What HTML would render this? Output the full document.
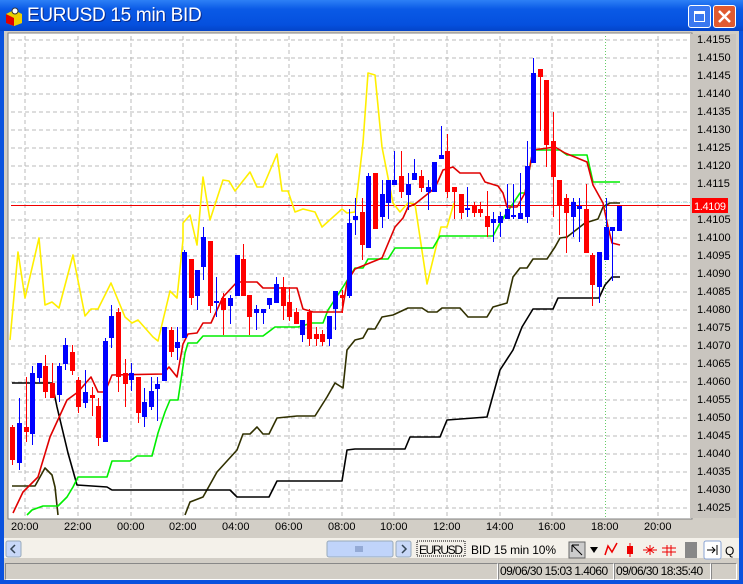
<!DOCTYPE html>
<html><head><meta charset="utf-8"><style>
*{margin:0;padding:0;box-sizing:border-box}
body{width:743px;height:584px;overflow:hidden;background:#0a52de;font-family:"Liberation Sans",sans-serif;position:relative}
.title{position:absolute;left:0;top:0;width:743px;height:31px;background:linear-gradient(#2d80f6,#0a5ae6 30%,#0550de 80%,#0444c8)}
.title span{position:absolute;left:27px;top:5px;color:#fff;font-size:19px;letter-spacing:-0.3px;text-shadow:1px 1px #0a2a8a}
.inner{position:absolute;left:4px;top:31px;width:735px;height:549px;background:#d2cec6}
.btn{position:absolute;top:5px;width:23px;height:23px;border:1px solid #fff;border-radius:3px}
.status div{position:absolute;top:563px;height:17px;border:1px solid #888;border-right-color:#fff;border-bottom-color:#fff;font-size:12px;line-height:15px;padding-left:1px;color:#000;background:#d2cec6;white-space:nowrap;overflow:hidden;letter-spacing:-0.6px}
.xl{position:absolute;top:521px;font-size:11px;color:#000}
.yl{position:absolute;left:697px;font-size:11px;color:#000}
</style></head><body>
<div class="title">
<svg style="position:absolute;left:4px;top:6px" width="20" height="20"><path d="M2 8 L10 4 L18 8 L18 17 L10 20 L2 17Z" fill="#e8d000"/><path d="M2 8 L10 12 L10 20 L2 17Z" fill="#e00000"/><path d="M10 12 L18 8 L18 17 L10 20Z" fill="#f0d000"/><circle cx="11" cy="5" r="3" fill="#fff" stroke="#333"/></svg>
<span>EURUSD 15 min BID</span>
<div class="btn" style="left:688px;background:#3a78f0"><div style="position:absolute;left:5px;top:5px;width:11px;height:11px;border:1px solid #fff;border-top-width:3px"></div></div>
<div class="btn" style="left:713px;background:#e05a30"><svg width="21" height="21"><path d="M5 5L16 16M16 5L5 16" stroke="#fff" stroke-width="2.5"/></svg></div>
</div>
<div class="inner"></div>
<svg style="position:absolute;left:0;top:0" width="743" height="584">
<rect x="8" y="33" width="684" height="486" fill="#fff" stroke="#808080"/>
<rect x="690" y="34" width="46" height="484" fill="#c9c5bf"/>
<g stroke="#bbb" stroke-dasharray="4,3" stroke-width="1">
<path d="M11 40H690M11 58H690M11 76H690M11 94H690M11 112H690M11 130H690M11 148H690M11 166H690M11 184H690M11 202H690M11 220H690M11 238H690M11 256H690M11 274H690M11 292H690M11 310H690M11 328H690M11 346H690M11 364H690M11 382H690M11 400H690M11 418H690M11 436H690M11 454H690M11 472H690M11 490H690M11 508H690"/>
<path d="M25 36V517M78 36V517M131 36V517M183 36V517M236 36V517M289 36V517M342 36V517M394 36V517M447 36V517M500 36V517M552 36V517M658 36V517"/>
</g>
<path d="M605.5 36V517" stroke="#6c6" stroke-dasharray="1,2"/>
<path d="M11 202.5H690" stroke="#aee" stroke-dasharray="1,1"/>
<path d="M11 205.5H690" stroke="#e00" stroke-width="1"/>
<g fill="none" stroke-width="1.6" stroke-linejoin="round">
<polyline stroke="#ffef00" points="10,340 18,252 25,298 39,238 45,305 52,302 59,308 73,255 85,316 91,309 98,309 111,283 125,317 132,323 138,320 153,337 158,341 170,291 177,298 183,240 183,223 190,215 197,245 203,177 210,220 223,180 229,181 235,191 250,172 257,187 263,187 277,154 282,191 288,191 295,212 303,209 315,212 322,227 342,209 347,213 355,212 363,143 368,73 375,75 382,147 393,203 400,212 408,203 415,204 427,284 441,227 447,227 454,203"/>
<polyline stroke="#303000" points="12,486 35,486 45,468 52,475 55,487 58,515"/>
<polyline stroke="#303000" points="185,515 190,502 203,497 217,472 237,450 243,434 250,434 257,427 263,434 269,434 277,418 297,416 315,416 327,397 335,383 343,388 347,350 355,340 363,338 368,329 375,329 382,317 393,315 408,308 422,308 428,312 437,312 442,308 460,308 468,317 487,317 493,307 507,303 513,277 520,268 527,268 533,259 547,259 555,247 560,238 567,237 585,223 598,219 603,207 610,203 620,203"/>
<polyline stroke="#000" points="12,383 52,383 57,407 68,453 77,485 107,487 112,490 230,490 237,497 269,497 277,481 342,481 347,450 355,449 405,449 410,437 440,437 447,420 487,417 500,370 513,350 522,327 533,309 553,309 558,298 599,298 605,285 612,277 620,277"/>
<polyline stroke="#00ee00" points="27,515 32,510 43,506 58,506 67,497 73,487 78,477 107,477 112,461 130,461 137,456 152,456 158,433 165,412 170,400 178,400 185,353 188,343 197,343 203,336 263,336 275,327 298,327 312,323 323,323 328,310 343,287 355,268 363,268 368,259 388,259 395,248 433,248 440,236 493,236 500,223 520,193 525,193 533,150 560,150 567,155 587,155 593,182 620,182"/>
<polyline stroke="#e00000" points="13,513 23,492 38,477 50,437 67,400 78,392 91,377 98,392 105,392 112,375 163,374 169,367 177,377 183,344 188,334 197,333 203,323 211,323 223,297 237,282 257,282 263,288 297,288 303,309 313,312 342,312 347,282 355,269 382,258 395,227 403,218 408,207 415,204 435,188 443,170 453,167 460,173 480,173 485,182 498,186 503,193 507,207 517,207 525,193 533,150 555,147 565,153 587,162 593,185 603,203 608,227 612,243 620,245"/>
</g>
<g id="c"></g>
<rect x="692" y="198" width="36" height="15" fill="#f00"/>
<text x="694" y="210" fill="#fff" font-size="11" font-family="Liberation Sans" textLength="32">1.4109</text>
<rect x="4" y="538" width="735" height="20" fill="#f4f1ea"/>
<rect x="6" y="541" width="15" height="16" rx="2" fill="#c8d8f8" stroke="#9ab"/>
<path d="M15 545L11 549L15 553" stroke="#345" stroke-width="1.5" fill="none"/>
<rect x="327" y="541" width="66" height="16" rx="2" fill="#c0d4fa" stroke="#9ab"/>
<path d="M356 546V552M358 546V552M360 546V552M362 546V552" stroke="#6780b0"/>
<rect x="396" y="541" width="15" height="16" rx="2" fill="#c8d8f8" stroke="#9ab"/>
<path d="M402 545L406 549L402 553" stroke="#345" stroke-width="1.5" fill="none"/>
<rect x="417" y="541" width="48" height="15" fill="none" stroke="#000" stroke-dasharray="1,1"/>
<text x="419" y="554" font-size="12" font-family="Liberation Sans" textLength="44">EURUSD</text>
<text x="471" y="554" font-size="12" font-family="Liberation Sans" textLength="85">BID  15 min  10%</text>
<rect x="569" y="542" width="16" height="16" fill="#ccc" stroke="#666"/>
<path d="M572 545L582 555M572 545V552M572 545H579" stroke="#000"/>
<path d="M590 547H598L594 553Z" fill="#000"/>
<path d="M605 555L608 546L612 552L617 543" stroke="#e00" fill="none" stroke-width="1.5"/>
<path d="M630 543V557" stroke="#e00"/><rect x="627" y="546" width="6" height="8" fill="#e00"/>
<path d="M643 550H657M650 545V555M646 547L650 550L646 553M654 547L650 550L654 553" stroke="#e00" fill="none"/>
<path d="M662 548H676M662 552H676M667 545V556M671 545V556" stroke="#e00"/>
<rect x="685" y="542" width="12" height="16" fill="#888"/>
<rect x="704" y="541" width="17" height="18" rx="2" fill="#fff" stroke="#8aa4d4"/>
<path d="M707 550H715M712 547L715 550L712 553M717 545V555" stroke="#000" fill="none"/>
<text x="725" y="555" font-size="12" font-family="Liberation Sans">Q</text>
</svg>
<div class="xl" style="left:11px">20:00</div><div class="xl" style="left:64px">22:00</div><div class="xl" style="left:117px">00:00</div><div class="xl" style="left:169px">02:00</div><div class="xl" style="left:222px">04:00</div><div class="xl" style="left:275px">06:00</div><div class="xl" style="left:328px">08:00</div><div class="xl" style="left:380px">10:00</div><div class="xl" style="left:433px">12:00</div><div class="xl" style="left:486px">14:00</div><div class="xl" style="left:538px">16:00</div><div class="xl" style="left:591px">18:00</div><div class="xl" style="left:644px">20:00</div>
<div class="yl" style="top:34px">1.4155</div><div class="yl" style="top:52px">1.4150</div><div class="yl" style="top:70px">1.4145</div><div class="yl" style="top:88px">1.4140</div><div class="yl" style="top:106px">1.4135</div><div class="yl" style="top:124px">1.4130</div><div class="yl" style="top:142px">1.4125</div><div class="yl" style="top:160px">1.4120</div><div class="yl" style="top:178px">1.4115</div><div class="yl" style="top:214px">1.4105</div><div class="yl" style="top:232px">1.4100</div><div class="yl" style="top:250px">1.4095</div><div class="yl" style="top:268px">1.4090</div><div class="yl" style="top:286px">1.4085</div><div class="yl" style="top:304px">1.4080</div><div class="yl" style="top:322px">1.4075</div><div class="yl" style="top:340px">1.4070</div><div class="yl" style="top:358px">1.4065</div><div class="yl" style="top:376px">1.4060</div><div class="yl" style="top:394px">1.4055</div><div class="yl" style="top:412px">1.4050</div><div class="yl" style="top:430px">1.4045</div><div class="yl" style="top:448px">1.4040</div><div class="yl" style="top:466px">1.4035</div><div class="yl" style="top:484px">1.4030</div><div class="yl" style="top:502px">1.4025</div>
<div class="status">
<div style="left:5px;width:493px"></div>
<div style="left:498px;width:116px">09/06/30 15:03 1.4060</div>
<div style="left:614px;width:97px">09/06/30 18:35:40</div>
<div style="left:711px;width:26px"></div>
</div>
<script>
var R=[[12,425,465,427,460],[26,377,442,427,432],[45,355,398,366,392],[52,363,398,383,398],[72,345,375,352,371],[78,377,413,380,407],[92,387,416,395,398],[98,398,446,406,438],[118,308,392,312,377],[125,359,407,373,384],[138,377,423,377,413],[171,327,357,330,352],[191,259,305,259,298],[210,241,313,241,306],[223,293,335,298,310],[243,244,287,259,296],[249,295,335,295,317],[283,277,320,287,306],[289,287,321,302,317],[296,308,324,312,324],[309,309,346,312,339],[316,327,346,334,339],[322,330,346,334,342],[342,290,313,295,298],[362,198,260,212,245],[375,173,229,173,229],[401,151,198,176,192],[421,170,192,176,188],[447,134,198,151,192],[454,187,219,187,192],[461,194,219,194,213],[474,202,217,205,213],[480,202,217,209,213],[487,191,237,216,227],[540,69,131,69,77],[546,80,167,80,145],[553,112,217,141,177],[559,180,235,180,205],[566,194,253,198,213],[586,184,253,209,253],[592,253,306,255,285]];
var B=[[19,398,470,423,463],[32,366,445,373,434],[39,363,383,363,378],[59,363,402,366,395],[65,338,370,345,364],[85,370,408,392,403],[105,338,442,341,442],[111,305,348,316,338],[131,363,391,373,380],[144,388,427,402,417],[151,377,410,391,407],[157,377,421,384,389],[164,327,381,327,381],[177,327,360,342,348],[184,250,338,252,338],[197,270,310,270,296],[203,227,280,237,267],[216,277,317,301,303],[230,295,324,298,306],[237,255,296,255,296],[256,305,330,309,313],[263,309,324,309,313],[269,298,309,298,305],[276,277,303,284,303],[302,320,342,320,335],[329,316,346,316,339],[335,291,330,291,309],[349,209,298,223,296],[355,198,235,216,220],[368,173,248,176,248],[382,180,228,194,217],[388,180,219,180,203],[394,151,185,180,185],[408,173,210,184,195],[414,159,180,173,180],[428,180,210,187,192],[434,162,192,162,192],[441,126,159,155,159],[467,187,217,208,210],[493,212,242,219,223],[500,212,237,216,223],[507,184,219,209,219],[513,184,219,215,217],[520,173,219,213,219],[527,141,223,166,217],[533,58,163,73,163],[573,198,237,202,217],[579,198,242,206,209],[599,252,303,252,287],[606,198,260,227,260],[612,227,281,227,231],[619,206,231,206,231]];
var s='';function add(a,c){a.forEach(function(k){s+='<rect x="'+k[0]+'" y="'+k[1]+'" width="1" height="'+(k[2]-k[1])+'" fill="'+c+'"/><rect x="'+(k[0]-2)+'" y="'+k[3]+'" width="5" height="'+Math.max(2,k[4]-k[3])+'" fill="'+c+'"/>';});}
add(R,'#f00');add(B,'#00f');document.getElementById('c').innerHTML=s;
</script>
</body></html>
